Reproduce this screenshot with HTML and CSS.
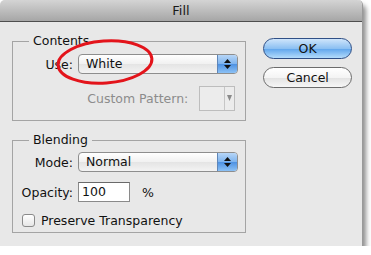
FILE: index.html
```html
<!DOCTYPE html>
<html lang="en">
<head>
    <meta charset="UTF-8">
    <title>Fill</title>
    <link rel="stylesheet" href="styles.css">
</head>
<body>
    <div class="window">
        <div class="titlebar">Fill</div>

        <div class="dialog">
            <div class="groups">
                <fieldset class="group group-contents">
                    <legend>Contents</legend>
                    <div class="row">
                        <span class="label">Use:</span>
                        <div class="popup">
                            <span class="popup-value">White</span>
                            <span class="popup-arrows">
                                <svg width="7" height="10" viewBox="0 0 7 10"><path d="M3.5 0 L7 4 L0 4 Z M0 6 L7 6 L3.5 10 Z" fill="#111"/></svg>
                            </span>
                        </div>
                    </div>
                    <div class="row row-pattern">
                        <span class="label-disabled">Custom Pattern:</span>
                        <div class="pattern-picker">
                            <span class="pattern-swatch"></span>
                            <span class="pattern-arrow">
                                <svg width="5" height="7" viewBox="0 0 5 7"><path d="M0 0 L5 0 L2.5 6 Z" fill="#8a8a8a"/></svg>
                            </span>
                        </div>
                    </div>
                </fieldset>

                <fieldset class="group group-blending">
                    <legend>Blending</legend>
                    <div class="row">
                        <span class="label">Mode:</span>
                        <div class="popup">
                            <span class="popup-value">Normal</span>
                            <span class="popup-arrows">
                                <svg width="7" height="10" viewBox="0 0 7 10"><path d="M3.5 0 L7 4 L0 4 Z M0 6 L7 6 L3.5 10 Z" fill="#111"/></svg>
                            </span>
                        </div>
                    </div>
                    <div class="row row-opacity">
                        <span class="label">Opacity:</span>
                        <div class="text-field">100</div>
                        <span class="unit">%</span>
                    </div>
                    <div class="row row-check">
                        <span class="checkbox"></span>
                        <span>Preserve Transparency</span>
                    </div>
                </fieldset>
            </div>

            <div class="buttons">
                <div class="btn btn-default">OK</div>
                <div class="btn">Cancel</div>
            </div>
        </div>

        <!-- red marker drawn over the Use popup -->
        <svg class="marker" width="104" height="52" viewBox="0 0 104 52">
            <ellipse cx="52" cy="25" rx="47" ry="21" fill="none" stroke="#e3141b" stroke-width="3" transform="rotate(-4 52 25)"/>
        </svg>
    </div>
</body>
</html>
```

FILE: styles.css
```css
* {
    margin: 0;
    padding: 0;
    box-sizing: border-box;
}

body {
    background: #ffffff;
    font-family: "DejaVu Sans", Verdana, sans-serif;
    font-size: 12.5px;
    color: #111;
}

.window {
    position: relative;
    width: 363px;
    height: 246px;
    background: #e8e8e8;
    border-radius: 5px 5px 0 0;
    border-right: 1px solid #9a9a9a;
    box-shadow: 3px 5px 5px rgba(0, 0, 0, 0.45);
}

.titlebar {
    height: 22px;
    line-height: 21px;
    text-align: center;
    font-size: 13px;
    color: #1a1a1a;
    background: linear-gradient(#d4d4d4, #a6a6a6);
    border-bottom: 1px solid #4e4e4e;
    border-radius: 5px 5px 0 0;
}

.dialog {
    display: flex;
    gap: 17px;
    padding: 11px 10px 0 12px;
}

.groups {
    width: 235px;
    display: flex;
    flex-direction: column;
    gap: 11px;
}

.group {
    border: 1px solid #a4a4a4;
    min-width: 0;
}

.group legend {
    margin-left: 16px;
    padding: 0 4px;
    font-size: 12.5px;
    line-height: 16px;
}

.group-contents {
    padding: 5px 7px 9px 0;
}

.group-blending {
    padding: 4px 7px 4px 0;
}

.row {
    display: flex;
    align-items: center;
}

.label {
    width: 60px;
    margin-right: 5px;
    text-align: right;
}

.row-pattern {
    justify-content: flex-end;
    margin-top: 12px;
    padding-right: 3px;
}

.label-disabled {
    color: #8c8c8c;
    margin-right: 11px;
}

.popup {
    flex: 1;
    height: 20px;
    display: flex;
    border: 1px solid #8e8e8e;
    border-radius: 4px;
    background: linear-gradient(#ffffff, #f1f1f1 50%, #e4e4e4 51%, #f3f3f3);
    overflow: hidden;
}

.popup-value {
    flex: 1;
    padding-left: 7px;
    line-height: 18px;
}

.popup-arrows {
    width: 20px;
    display: flex;
    align-items: center;
    justify-content: center;
    border-left: 1px solid #5f86b8;
    background: linear-gradient(#b7d6f7, #7db3ee 50%, #4d91e2 51%, #8cc1f5);
}

.pattern-picker {
    width: 36px;
    height: 25px;
    display: flex;
    border: 1px solid #bdbdbd;
    background: #ececec;
}

.pattern-swatch {
    flex: 1;
}

.pattern-arrow {
    width: 10px;
    display: flex;
    align-items: center;
    justify-content: center;
    border-left: 1px solid #c6c6c6;
}

.row-opacity {
    margin-top: 10px;
}

.text-field {
    width: 52px;
    height: 20px;
    padding-left: 3px;
    line-height: 18px;
    background: #ffffff;
    border: 1px solid #8a8a8a;
    border-top-color: #6a6a6a;
}

.unit {
    margin-left: 12px;
}

.row-check {
    margin-top: 11px;
    padding-left: 9px;
    gap: 6px;
}

.checkbox {
    width: 13px;
    height: 13px;
    border: 1px solid #8a8a8a;
    border-radius: 3px;
    background: linear-gradient(#ffffff, #e6e6e6);
}

.buttons {
    width: 89px;
    padding-top: 5px;
    display: flex;
    flex-direction: column;
    gap: 8px;
}

.btn {
    height: 21px;
    line-height: 19px;
    text-align: center;
    border: 1px solid #6c6c6c;
    border-radius: 11px;
    background: linear-gradient(#ffffff, #f4f4f4 50%, #e2e2e2 51%, #f6f6f6);
}

.btn-default {
    border-color: #2f4f86;
    background: linear-gradient(#cfe5fb, #8cc0f2 50%, #5ea4ec 51%, #b4dcfb);
}

.marker {
    position: absolute;
    left: 53px;
    top: 37px;
}
```
